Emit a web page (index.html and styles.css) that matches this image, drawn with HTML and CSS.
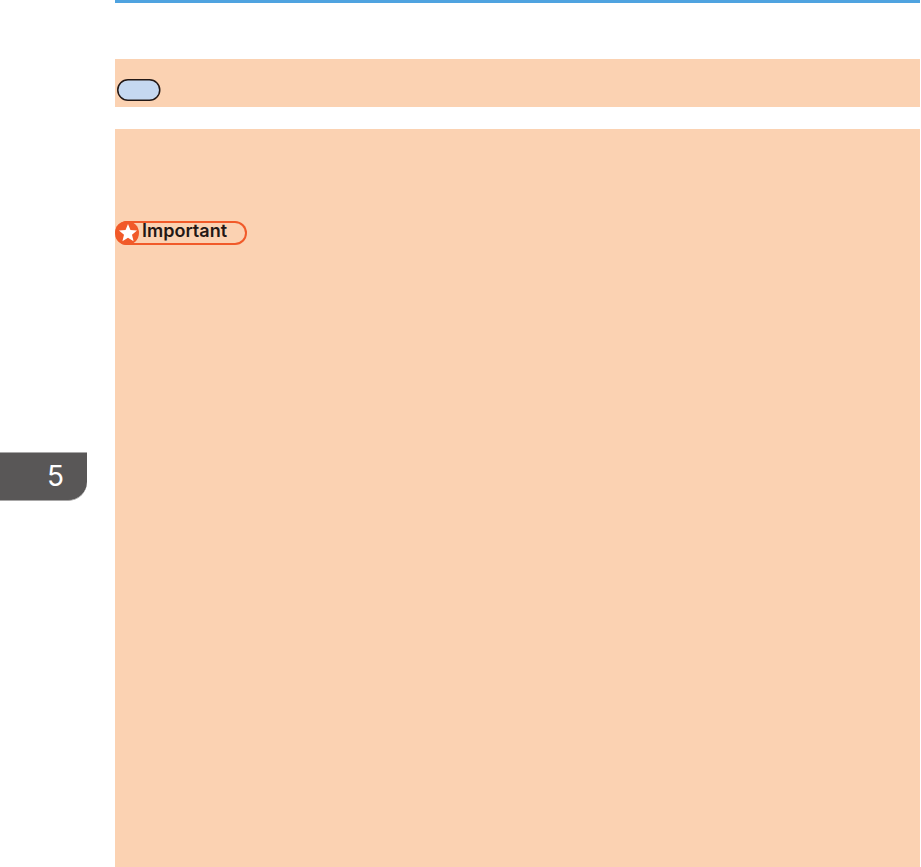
FILE: index.html
```html
<!DOCTYPE html>
<html lang="en">
<head>
<meta charset="utf-8">
<title>Page</title>
<link rel="stylesheet" href="styles.css">
</head>
<body>
<div class="page">
  <aside class="side">
    <div class="tab">5</div>
  </aside>
  <main class="content">
    <div class="rule"></div>
    <section class="band">
      <svg class="key" viewBox="0 0 44 22" width="44" height="22" aria-hidden="true">
        <rect x="0.75" y="0.75" width="42" height="20.5" rx="10.25" fill="#c5d8f0" stroke="#231815" stroke-width="1.5"/>
      </svg>
    </section>
    <section class="block">
      <div class="badge">
        <svg class="star" viewBox="0 0 24 24" width="24" height="24" aria-hidden="true">
          <circle cx="12" cy="12" r="12" fill="#f15a29"/>
          <polygon points="13,3 15.47,9.1 22.03,9.56 17,13.8 18.58,20.19 13,16.7 7.42,20.19 9,13.8 3.97,9.56 10.53,9.1" fill="#fff"/>
        </svg>
        <span class="badge-text">Important</span>
      </div>
    </section>
  </main>
</div>
</body>
</html>
```
FILE: styles.css
```css
html, body {
  margin: 0;
  padding: 0;
  background: #fff;
}
.page {
  display: flex;
  width: 921px;
  height: 867px;
  overflow: hidden;
}
.side {
  width: 115px;
  flex: none;
  padding-top: 452px;
  box-sizing: border-box;
}
.tab {
  width: 87px;
  height: 49px;
  box-sizing: border-box;
  background: #595757;
  border-top: 1px solid #a8a7a7;
  border-bottom: 1px solid #a8a7a7;
  border-bottom-right-radius: 19px;
  color: #fff;
  font: 400 28px/47px "Inter", "Liberation Sans", sans-serif;
  text-align: right;
  padding-right: 23px;
}
.content {
  width: 805px;
  flex: none;
  display: flex;
  flex-direction: column;
}
.rule {
  height: 3px;
  background: #4fa3e0;
  margin-bottom: 56px;
}
.band {
  height: 48px;
  background: #fbd2b2;
  margin-bottom: 22px;
  padding: 20px 0 0 2px;
  box-sizing: border-box;
}
.key {
  display: block;
}
.block {
  flex: 1;
  background: #fbd2b2;
  padding-top: 92px;
}
.badge {
  display: flex;
  align-items: center;
  gap: 3px;
  width: 132px;
  height: 24px;
  box-sizing: border-box;
  border: 2px solid #f15a29;
  border-left: 0;
  border-radius: 12px;
}
.star {
  flex: none;
}
.badge-text {
  font: 600 18px/20px "Inter", "Liberation Sans", sans-serif;
  color: #231815;
  margin-top: -4px;
}
```
